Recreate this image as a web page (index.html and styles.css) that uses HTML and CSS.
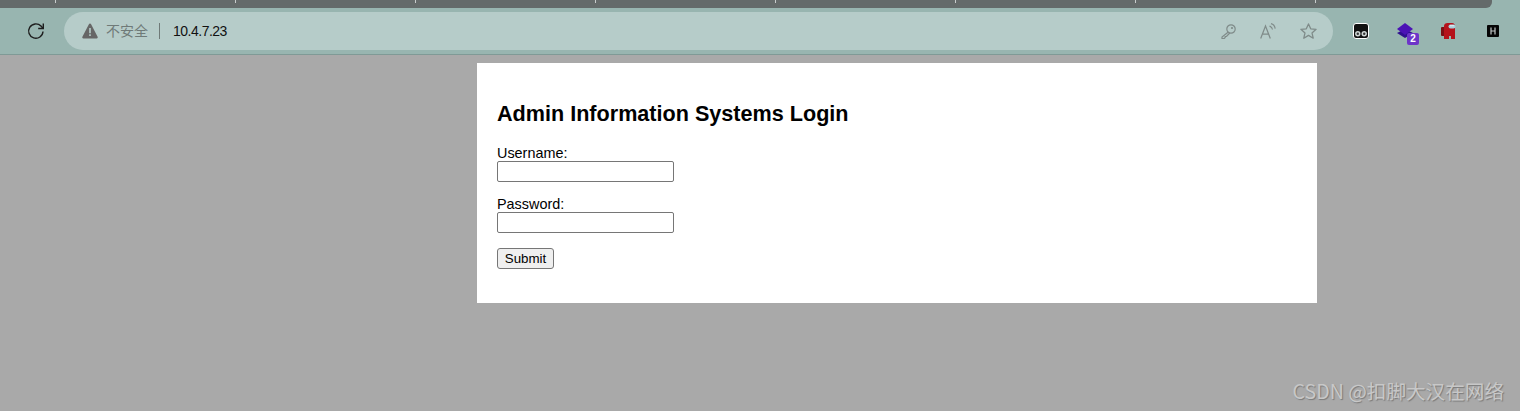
FILE: index.html
```html
<!DOCTYPE html>
<html lang="en">
<head>
<meta charset="utf-8">
<title>Admin Information Systems Login</title>
<link rel="stylesheet" href="styles.css">
</head>
<body>
<header class="chrome">
  <div class="tabstrip">
    <div class="tabs">
      <span class="tab tab-first"></span><span class="tab"></span><span class="tab"></span><span class="tab"></span><span class="tab"></span><span class="tab"></span><span class="tab"></span><span class="tab"></span>
    </div>
  </div>
  <div class="toolbar">
    <svg class="reload" width="20" height="20" viewBox="0 0 20 20" fill="none" stroke="#1d1d1d" stroke-width="1.4"><path d="M17 10.500a7.200 7.200 0 1 1-2-5.400l2 2.200"/><path d="M17.300 2.400v5.100h-5.100"/></svg>
    <div class="omnibox">
      <svg class="warn" width="16" height="16" viewBox="0 0 16 16"><path fill="#666" d="M8 .5c.5 0 .9.3 1.100.7l6.500 12.600c.4.800-.1 1.700-1 1.700H1.400c-.9 0-1.400-.9-1-1.700L6.900 1.200C7.100.8 7.500.5 8 .5z"/><path fill="#b6ccc9" d="M7.200 5h1.600v5.200H7.200zM7.200 11.300h1.600v1.600H7.200z"/></svg>
      <span class="insecure">不安全</span>
      <span class="divider"></span>
      <span class="url">10.4.7.23</span>
      <span class="omni-icons">
        <span class="omni-cell"><svg width="15" height="15" viewBox="0 0 15 15" fill="none" stroke="#7f8b89" stroke-width="1.200"><circle cx="10" cy="5" r="4.200"/><path d="M7 8.200 1 13v1.500h2.200l1-1v-1h1.300L8.800 9"/><circle cx="11" cy="4" r=".5"/></svg></span>
        <span class="omni-cell"><svg width="16" height="16" viewBox="0 0 16 16" fill="none" stroke="#7f8b89" stroke-width="1.200"><path d="M.7 15.500 5.500 3l4.800 12.500M2.300 11.200h6.400"/><path d="M9.500 3.200c1.800.4 2.700 1.700 3 3.300M11 .7c2.500.6 3.800 2.500 4.200 5"/></svg></span>
        <span class="omni-cell"><svg width="17" height="16" viewBox="0 0 17 16" fill="none" stroke="#7f8b89" stroke-width="1.300" stroke-linejoin="round"><path d="M8.500.9 10.700 5.800l5.400.5-4.100 3.600 1.200 5.300-4.700-2.800-4.700 2.800L5 9.900.9 6.300l5.400-.5z"/></svg></span>
      </span>
    </div>
    <div class="extensions">
      <span class="ext">
        <svg width="16" height="16" viewBox="0 0 16 16"><rect x=".5" y=".5" width="15" height="15" rx="2.500" fill="#111" stroke="#fff"/><circle cx="4.800" cy="10.800" r="2.700" fill="#cfd6d5"/><circle cx="11.200" cy="10.800" r="2.700" fill="#cfd6d5"/><circle cx="4.800" cy="10.800" r="1.200" fill="#333"/><circle cx="11.200" cy="10.800" r="1.200" fill="#333"/></svg>
      </span>
      <span class="ext">
        <svg width="16" height="16" viewBox="0 0 16 16"><path fill="#2f0f8f" d="M0 10l8-4 8 4-8 5z"/><path fill="#4b12b5" d="M0 6l8-6 8 6-8 6z"/></svg>
        <span class="badge">2</span>
      </span>
      <span class="ext">
        <svg width="16" height="16" viewBox="0 0 16 16"><rect x="0" y="4" width="4" height="9" rx="1" fill="#7c0f14"/><path fill="#b5121b" d="M3 3c0-2 1.500-3 3.500-3H11c2 0 3 1.500 3 3v13h-4v-3H8v3H3z"/><rect x="7.500" y="1.500" width="7" height="4" rx="2" fill="#a8d0dc"/><rect x="9" y="2.200" width="4" height="1" fill="#e4f1f5"/></svg>
      </span>
      <span class="ext">
        <svg width="12" height="12" viewBox="0 0 12 12"><rect width="12" height="12" rx="1" fill="#050505"/><path fill="none" stroke="#c4c8c8" stroke-width="1.200" d="M4 2.500v7M8 2.500v7M4 6h4"/></svg>
      </span>
    </div>
  </div>
</header>
<main class="page">
  <section class="card">
    <h2 class="title">Admin Information Systems Login</h2>
    <form class="form">
      <p class="field"><label class="label">Username:<br><input class="input" type="text"></label></p>
      <p class="field"><label class="label">Password:<br><input class="input" type="password"></label></p>
      <p class="field"><input class="submit" type="submit" value="Submit"></p>
    </form>
  </section>
  <div class="watermark">CSDN @扣脚大汉在网络</div>
</main>
</body>
</html>
```

FILE: styles.css
```css
* { box-sizing: border-box; }
html, body { margin: 0; padding: 0; }
body {
  width: 1520px;
  height: 411px;
  overflow: hidden;
  background: #a9a9a9;
  font-family: "Liberation Sans", Arial, sans-serif;
  display: flex;
  flex-direction: column;
}
.chrome {
  height: 55px;
  flex: none;
  background: #98b5b0;
  border-bottom: 1px solid #7f9a96;
}
.tabstrip { height: 8px; padding-right: 28px; }
.tabs {
  height: 8px;
  display: flex;
  background: #646a6a;
  border-bottom-right-radius: 6px;
  overflow: hidden;
}
.tab {
  width: 180px;
  height: 3px;
  flex: none;
  border-right: 1px solid #c8cccc;
}
.tab-first { width: 56px; }
.toolbar {
  height: 46px;
  display: flex;
  align-items: flex-start;
  padding: 4px 0 0 26px;
}
.reload { flex: none; margin: 9px 18px 0 0; }
.omnibox {
  width: 1269px;
  height: 38px;
  flex: none;
  background: #b6ccc9;
  border-radius: 19px;
  display: flex;
  align-items: center;
  padding: 0 5px 0 18px;
}
.warn { flex: none; margin-right: 8px; }
.insecure {
  font-family: "Noto Sans CJK SC", "Noto Sans", sans-serif;
  font-size: 14px;
  line-height: 18px;
  padding-bottom: 2px;
  color: #6f7a78;
}
.divider { width: 1px; height: 16px; background: #6f7a78; margin: 0 13px 0 11px; }
.url { font-size: 14px; color: #111; letter-spacing: -.5px; }
.omni-icons { margin-left: auto; display: flex; align-items: center; }
.omni-cell { width: 40px; display: flex; justify-content: center; }
.extensions {
  display: flex;
  align-items: center;
  height: 38px;
  padding-left: 6px;
}
.ext {
  width: 44px;
  display: flex;
  justify-content: center;
  position: relative;
}
.badge {
  position: absolute;
  left: 24px;
  top: 10px;
  width: 12px;
  height: 12px;
  border-radius: 2px;
  background: #6d35c9;
  color: #fff;
  font-size: 10px;
  font-weight: 700;
  line-height: 12px;
  text-align: center;
}
.page { flex: 1; position: relative; padding: 8px 0 0 477px; }
.card {
  width: 840px;
  height: 240px;
  background: #fff;
  padding: 20px;
}
.title {
  margin: 18px 0 0;
  font-size: 21.6px;
  line-height: 25px;
  font-weight: 700;
  color: #000;
}
.form { margin-top: 19px; }
.field { margin: 0 0 14.4px; font-size: 14.4px; line-height: 16px; color: #000; }
.label { display: block; }
.input {
  display: inline-block;
  width: 177px;
  height: 21px;
  margin: 0;
  padding: 1px 2px;
  border: 1px solid #767676;
  border-radius: 2px;
  background: #fff;
  vertical-align: top;
}
.submit {
  display: block;
  width: 57px;
  height: 21px;
  margin: 0;
  padding: 0;
  font-family: "Liberation Sans", Arial, sans-serif;
  font-size: 13.3px;
  color: #000;
  background: #efefef;
  border: 1px solid #767676;
  border-radius: 3px;
}
.watermark {
  position: absolute;
  right: 16px;
  bottom: 8px;
  font-family: "Noto Sans CJK SC", "Liberation Sans", sans-serif;
  font-size: 19.6px;
  line-height: 24px;
  color: #c8c8c8;
  text-shadow: 1px 1px 1px #7a7a7a;
}
```
